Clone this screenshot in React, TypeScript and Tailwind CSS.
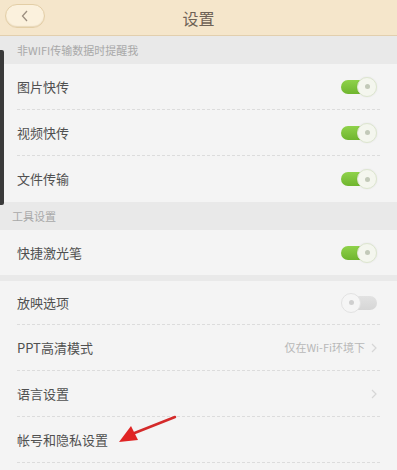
const font = { fontFamily: '"Noto Sans CJK SC", "Noto Sans", sans-serif' };

function Toggle({ on }: { on: boolean }) {
  if (on) {
    return (
      <div className="relative h-[20px] w-[36px]">
        <div className="absolute left-0 top-[3px] h-[14px] w-[28px] rounded-full bg-gradient-to-b from-[#8fd24a] to-[#6fb52e]" />
        <div className="absolute right-0 top-0 flex h-[20px] w-[20px] items-center justify-center rounded-full border border-[#dde6cf] bg-[#f4f6ee] shadow-[0_0_2px_rgba(0,0,0,0.08)]">
          <div className="h-[5px] w-[5px] rounded-full bg-[#c2c9b8]" />
        </div>
      </div>
    );
  }
  return (
    <div className="relative h-[20px] w-[36px]">
      <div className="absolute right-0 top-[3px] h-[14px] w-[28px] rounded-full bg-gradient-to-b from-[#e2e2e2] to-[#d6d6d6]" />
      <div className="absolute left-0 top-0 flex h-[20px] w-[20px] items-center justify-center rounded-full border border-[#e2e2e2] bg-[#f5f5f5]">
        <div className="h-[5px] w-[5px] rounded-full bg-[#cfcfcf]" />
      </div>
    </div>
  );
}

function Chevron() {
  return (
    <svg width="6" height="10" viewBox="0 0 6 10" className="ml-[6px]">
      <path d="M1 1l4 4-4 4" fill="none" stroke="#d6d6d6" strokeWidth="1.2" />
    </svg>
  );
}

function Row({
  label,
  right,
  divider = true,
  h = "h-[46px]",
}: {
  label: string;
  right?: React.ReactNode;
  divider?: boolean;
  h?: string;
}) {
  return (
    <div className={`mx-[17px] flex ${h} items-center justify-between ${divider ? "border-b border-dashed border-[#dcdcdc]" : ""}`}>
      <span className="text-[13px] text-[#505050]">{label}</span>
      <div className="mr-[3px] flex items-center">{right}</div>
    </div>
  );
}

function SectionHeader({ title, indent = "pl-[17px]" }: { title: string; indent?: string }) {
  return (
    <div className={`flex h-[28px] items-center bg-[#e9e9e9] ${indent} text-[11px] text-[#a8a8a8]`}>
      {title}
    </div>
  );
}

export default function App() {
  return (
    <div className="relative h-[470px] w-[397px] overflow-hidden bg-[#f4f4f4]" style={font}>
      <div className="relative flex h-[36px] items-center justify-center border-b border-[#e2cfae] bg-[#f5e6cb]">
        <div className="absolute left-[5px] top-[4px] flex h-[24px] w-[40px] items-center justify-center rounded-full border border-[#e3cea6] bg-[#fbf1dd] shadow-[inset_0_-1px_1px_rgba(190,160,110,0.3)]">
          <svg width="8" height="12" viewBox="0 0 8 12">
            <path d="M6 1L1.5 6 6 11" fill="none" stroke="#9c8f80" strokeWidth="1.3" />
          </svg>
        </div>
        <span className="text-[16px] text-[#6e6256]">设置</span>
      </div>

      <SectionHeader title="非WIFI传输数据时提醒我" />
      <Row label="图片快传" right={<Toggle on />} />
      <Row label="视频快传" right={<Toggle on />} />
      <Row label="文件传输" right={<Toggle on />} divider={false} />

      <SectionHeader title="工具设置" indent="pl-[12px]" />
      <Row label="快捷激光笔" right={<Toggle on />} divider={false} h="h-[45px]" />
      <div className="h-[6px] bg-[#e9e9e9]" />
      <Row label="放映选项" right={<Toggle on={false} />} h="h-[44px]" />
      <Row
        label="PPT高清模式"
        right={
          <>
            <span className="text-[11px] text-[#b8b8b8]">仅在Wi-Fi环境下</span>
            <Chevron />
          </>
        }
      />
      <Row label="语言设置" right={<Chevron />} />
      <Row label="帐号和隐私设置" />

      <div className="absolute left-0 top-[50px] h-[155px] w-[4px] rounded-r-[2px] bg-[#3a3a3a]" />

      <svg className="absolute left-0 top-0" width="397" height="470" viewBox="0 0 397 470">
        <line x1="175" y1="417" x2="132" y2="434" stroke="#d42a2a" strokeWidth="2.5" strokeLinecap="round" />
        <path d="M119 442 L131 426 L138 440 Z" fill="#e02424" />
      </svg>
    </div>
  );
}
